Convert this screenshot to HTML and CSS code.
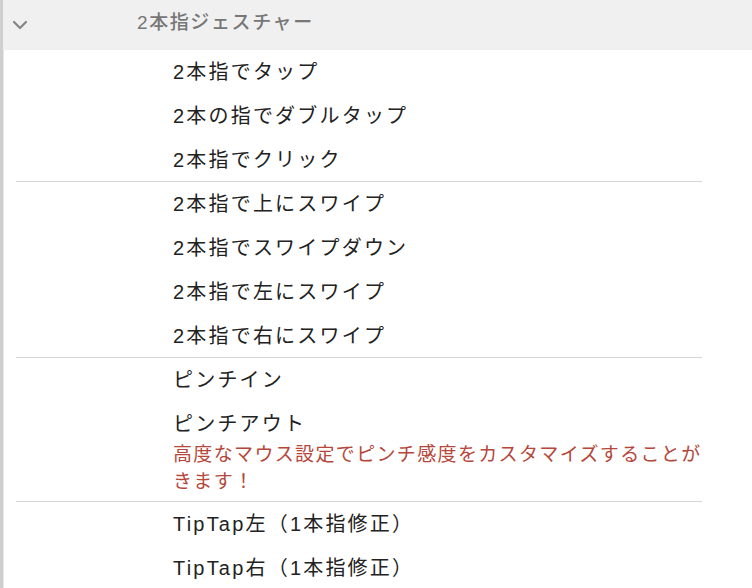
FILE: index.html
```html
<!DOCTYPE html>
<html lang="ja">
<head>
<meta charset="utf-8">
<title>2本指ジェスチャー</title>
<link rel="stylesheet" href="styles.css">
</head>
<body>
<div class="panel">
  <div class="section-head">
    <svg class="chevron" width="16" height="10" viewBox="0 0 16 10"><path d="M2 2 L8 8 L14 2" fill="none" stroke="#858585" stroke-width="2.2" stroke-linecap="round" stroke-linejoin="round"/></svg>
    <span class="section-title">2本指ジェスチャー</span>
  </div>

  <div class="group">
    <div class="item">2本指でタップ</div>
    <div class="item">2本の指でダブルタップ</div>
    <div class="item">2本指でクリック</div>
  </div>
  <div class="group">
    <div class="item">2本指で上にスワイプ</div>
    <div class="item">2本指でスワイプダウン</div>
    <div class="item">2本指で左にスワイプ</div>
    <div class="item">2本指で右にスワイプ</div>
  </div>
  <div class="group">
    <div class="item">ピンチイン</div>
    <div class="item with-note">ピンチアウト
      <div class="note">高度なマウス設定でピンチ感度をカスタマイズすることがきます！</div>
    </div>
  </div>
  <div class="group last">
    <div class="item">TipTap左（1本指修正）</div>
    <div class="item">TipTap右（1本指修正）</div>
  </div>
</div>
</body>
</html>
```

FILE: styles.css
```css
html, body {margin: 0; padding: 0; background: #fff;}
body {font-family: "Liberation Sans", "Noto Sans CJK JP", sans-serif; color: #222; width: 752px; height: 588px; overflow: hidden;}
.panel {border-left: 3px solid #cfcfcf; min-height: 588px; box-shadow: inset 1px 0 0 #e6e6e6;}
.section-head {height: 50px; background: #f0f0f0; display: flex; align-items: center;}
.chevron {margin-left: 9px; margin-top: 0; flex: none;}
.section-title {margin-left: 109px; font-size: 19px; font-weight: 500; color: #777; letter-spacing: 1.6px; margin-top: -10px;}
.group {margin-left: 13px; width: 686px; border-bottom: 1px solid #d4d4d4; overflow: hidden;}
.group.last {border-bottom: none;}
.item {height: 43.75px; line-height: 45.5px; padding-left: 157px; font-size: 20px; letter-spacing: 2.2px; box-sizing: border-box;}
.item.with-note {height: auto; line-height: 1; padding-top: 12px; padding-bottom: 6px;}
.note {color: #b5473b; font-size: 19px; letter-spacing: 1.35px; line-height: 27px; margin-top: 7px; width: 534px;}
```
